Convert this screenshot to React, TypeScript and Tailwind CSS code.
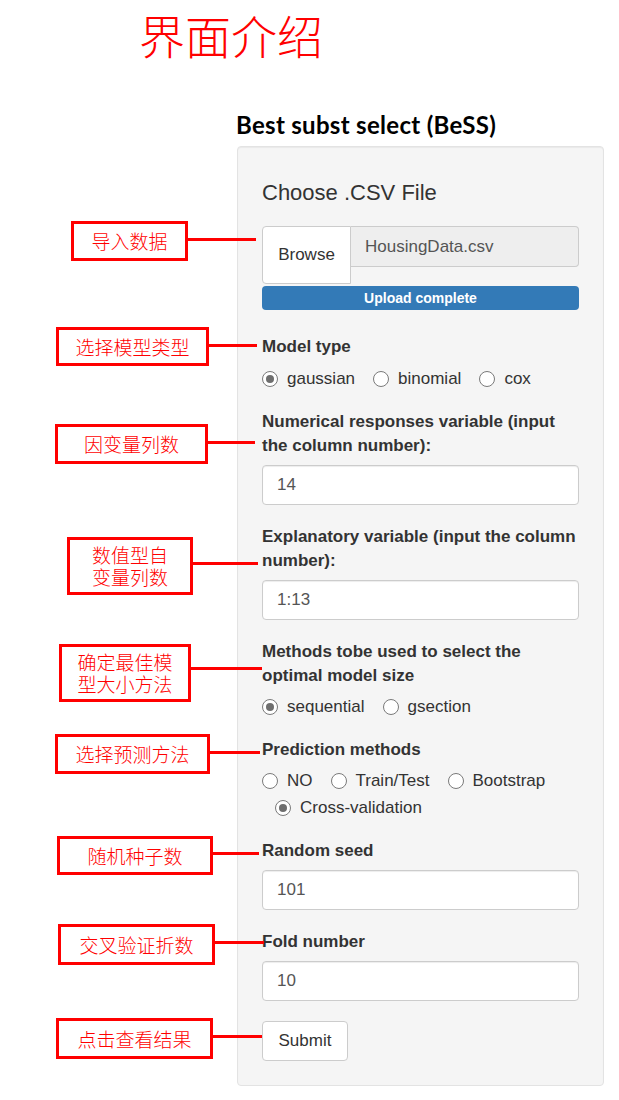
import React from "react";

const sans = { fontFamily: '"Liberation Sans", Arial, sans-serif' };
const cjk = { fontFamily: '"Noto Sans CJK SC", sans-serif' };

type Callout = {
  text: string[];
  left: number;
  top: number;
  width: number;
  height: number;
  lineY: number;
  lineEnd: number;
};

const callouts: Callout[] = [
  { text: ["导入数据"], left: 71, top: 221, width: 117, height: 40, lineY: 239, lineEnd: 256 },
  { text: ["选择模型类型"], left: 56, top: 327, width: 153, height: 39, lineY: 345, lineEnd: 257 },
  { text: ["因变量列数"], left: 55, top: 424, width: 153, height: 40, lineY: 442, lineEnd: 255 },
  { text: ["数值型自", "变量列数"], left: 67, top: 537, width: 126, height: 58, lineY: 563, lineEnd: 258 },
  { text: ["确定最佳模", "型大小方法"], left: 59, top: 644, width: 132, height: 58, lineY: 668, lineEnd: 262 },
  { text: ["选择预测方法"], left: 55, top: 734, width: 155, height: 40, lineY: 752, lineEnd: 260 },
  { text: ["随机种子数"], left: 57, top: 836, width: 156, height: 39, lineY: 853, lineEnd: 259 },
  { text: ["交叉验证折数"], left: 58, top: 924, width: 157, height: 41, lineY: 942, lineEnd: 264 },
  { text: ["点击查看结果"], left: 56, top: 1018, width: 157, height: 41, lineY: 1036, lineEnd: 262 },
];

function Radio({ label, checked }: { label: string; checked?: boolean }) {
  return (
    <span className="flex items-center gap-[9px]">
      <span className="flex h-[16px] w-[16px] items-center justify-center rounded-full border border-[#7a7a7a] bg-white">
        {checked && <span className="h-[8px] w-[8px] rounded-full bg-[#6e6e6e]" />}
      </span>
      <span>{label}</span>
    </span>
  );
}

function Field({ label, value }: { label: React.ReactNode; value: string }) {
  return (
    <div className="mt-[20px]">
      <div className="font-bold leading-[24px] text-[#333]">{label}</div>
      <div className="mt-[7px] flex h-[40px] items-center rounded-[4px] border border-[#ccc] bg-white pl-[14px] text-[#555] shadow-[inset_0_1px_1px_rgba(0,0,0,0.075)]">
        {value}
      </div>
    </div>
  );
}

export default function App() {
  return (
    <div className="relative h-[1100px] w-[619px] overflow-hidden bg-white">
      <div className="pl-[139px] pt-[11px] text-[46px] font-light leading-[46px] text-[#ff0000]" style={cjk}>
        界面介绍
      </div>
      <div
        className="ml-[236px] mt-[53px] text-[24px] font-bold leading-[30px] tracking-[0.3px] text-black"
        style={{ fontFamily: "Lato, sans-serif" }}
      >
        Best subst select (BeSS)
      </div>

      {/* well panel */}
      <div
        className="ml-[237px] mt-[6px] w-[367px] rounded-[4px] border border-[#e3e3e3] bg-[#f5f5f5] px-[24px] pb-[24px] pt-[33px] text-[17px] text-[#333] shadow-[inset_0_1px_1px_rgba(0,0,0,0.05)]"
        style={sans}
      >
        <div className="text-[22px] leading-[26px] text-[#333]">Choose .CSV File</div>

        <div className="mt-[20px] flex items-start">
          <div className="flex h-[58px] w-[89px] items-center justify-center rounded-l-[4px] border border-[#ccc] bg-white">
            Browse
          </div>
          <div className="flex h-[41px] flex-1 items-center rounded-r-[4px] border border-l-0 border-[#ccc] bg-[#eee] pl-[14px] text-[#555]">
            HousingData.csv
          </div>
        </div>
        <div className="mt-[2px] flex h-[24px] items-center justify-center rounded-[4px] bg-[#337ab7] text-[14px] font-bold text-white">
          Upload complete
        </div>

        <div className="mt-[25px] font-bold leading-[24px]">Model type</div>
        <div className="mt-[8px] flex h-[24px] items-center gap-[18px]">
          <Radio label="gaussian" checked />
          <Radio label="binomial" />
          <Radio label="cox" />
        </div>

        <div className="mt-[-1px]">
          <Field label="Numerical responses variable (input the column number):" value="14" />
        </div>
        <Field label="Explanatory variable (input the column number):" value="1:13" />

        <div className="mt-[20px] font-bold leading-[24px]">
          Methods tobe used to select the optimal model size
        </div>
        <div className="mt-[7px] flex h-[24px] items-center gap-[18px]">
          <Radio label="sequential" checked />
          <Radio label="gsection" />
        </div>

        <div className="mt-[19px] font-bold leading-[24px]">Prediction methods</div>
        <div className="mt-[7px] flex h-[24px] items-center gap-[18px]">
          <Radio label="NO" />
          <Radio label="Train/Test" />
          <Radio label="Bootstrap" />
        </div>
        <div className="mt-[3px] flex h-[24px] items-center pl-[13px]">
          <Radio label="Cross-validation" checked />
        </div>

        <div className="mt-[-1px]">
          <Field label="Random seed" value="101" />
        </div>
        <Field label="Fold number" value="10" />

        <button className="mt-[20px] flex h-[40px] w-[86px] items-center justify-center rounded-[4px] border border-[#ccc] bg-white text-[#333]">
          Submit
        </button>
      </div>

      {/* annotation callouts */}
      {callouts.map((c, i) => (
        <React.Fragment key={i}>
          <div
            className="absolute z-10 flex items-center justify-center border-[3px] border-[#ff0000] bg-white text-center text-[19px] font-light leading-[22px] text-[#ff0000]"
            style={{ ...cjk, left: c.left, top: c.top, width: c.width, height: c.height }}
          >
            <span>
              {c.text.map((t, j) => (
                <React.Fragment key={t}>
                  {j > 0 && <br />}
                  {t}
                </React.Fragment>
              ))}
            </span>
          </div>
          <div
            className="absolute z-10 h-[3px] bg-[#ff0000]"
            style={{ left: c.left + c.width, top: c.lineY - 1, width: c.lineEnd - c.left - c.width }}
          />
        </React.Fragment>
      ))}
    </div>
  );
}
